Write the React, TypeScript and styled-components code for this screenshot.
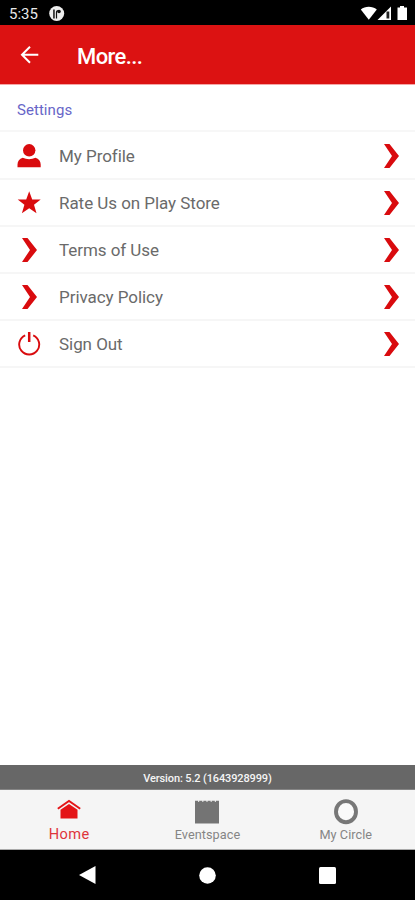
import React from "react";
import styled, { createGlobalStyle } from "styled-components";

const RED = "#dc1212";
const ICON_RED = "#d90b0e";

const GlobalStyle = createGlobalStyle`
  * { box-sizing: border-box; }
  body { margin: 0; background: #fff; font-family: Roboto, "Liberation Sans", sans-serif; }
`;

const Screen = styled.div`
  display: flex;
  flex-direction: column;
  width: 415px;
  height: 900px;
  overflow: hidden;
  background: #fff;
  svg { display: block; flex: none; }
`;

const StatusBar = styled.div`
  display: flex;
  align-items: center;
  height: 25px;
  padding: 2px 6px 0 9px;
  background: #000;
  color: #e8e8e8;
  flex: none;
`;

const Clock = styled.span`
  width: 40px;
  font-size: 15px;
  font-weight: 400;
  line-height: 20px;
`;

const StatusIcons = styled.div`
  display: flex;
  align-items: center;
  margin-left: auto;
`;

const AppBar = styled.header`
  display: flex;
  align-items: center;
  height: 60px;
  padding: 0 20px 1px;
  background: ${RED};
  border-bottom: 1px solid #f5a6a6;
  flex: none;
`;

const BackButton = styled.button`
  width: 57px;
  padding: 0;
  border: 0;
  background: none;
`;

const Title = styled.h1`
  margin: 6px 0 0;
  color: #fff;
  font-size: 22px;
  font-weight: 500;
  line-height: 28px;
  letter-spacing: -0.6px;
`;

const SectionTitle = styled.h2`
  height: 47px;
  margin: 0;
  padding-left: 17px;
  border-bottom: 2px solid #f7f7f7;
  color: #6866c8;
  font-size: 15px;
  font-weight: 400;
  line-height: 50px;
  letter-spacing: 0.05px;
  flex: none;
`;

const List = styled.main`
  flex: 1;
`;

const Row = styled.div`
  display: flex;
  align-items: center;
  height: 47px;
  padding: 0 12px 0 17px;
  border-bottom: 2px solid #f6f6f6;
  &:first-child { height: 48px; padding-top: 1px; }
`;

const RowIcon = styled.div`
  display: flex;
  width: 42px;
`;

const RowLabel = styled.span`
  flex: 1;
  padding-top: 1px;
  color: #6a6a6a;
  font-size: 17px;
  line-height: 22px;
  letter-spacing: -0.05px;
`;

const VersionBar = styled.div`
  height: 25px;
  background: #676767;
  border-bottom: 1px solid #858585;
  color: #f5f5f5;
  font-size: 11px;
  font-weight: 500;
  line-height: 27px;
  letter-spacing: -0.13px;
  text-align: center;
  flex: none;
`;

const TabBar = styled.nav`
  display: grid;
  grid-template-columns: repeat(3, 1fr);
  height: 60px;
  background: #f5f5f5;
  border-bottom: 1px solid #aaa;
  flex: none;
`;

const Tab = styled.div<{ $active?: boolean }>`
  display: flex;
  flex-direction: column;
  align-items: center;
  padding-top: 9px;
  color: ${({ $active }) => ($active ? "#df343b" : "#858585")};
  font-size: ${({ $active }) => ($active ? "14.6px" : "12.7px")};
  line-height: 17px;
  letter-spacing: ${({ $active }) => ($active ? "0.35px" : "0.05px")};
`;

const TabIcon = styled.div`
  height: 27px;
`;

const NavBar = styled.div`
  display: flex;
  justify-content: space-between;
  align-items: center;
  height: 50px;
  padding: 0 79px;
  background: #000;
  flex: none;
`;

const Chevron = () => (
  <svg width="24" height="24" viewBox="0 0 24 24" fill={ICON_RED}>
    <path d="M5 0h5.500l9.500 12-9.500 12H5l8-12z" />
  </svg>
);

const PersonIcon = () => (
  <svg width="24" height="24" viewBox="0 0 24 24" fill={ICON_RED}>
    <circle cx="12.200" cy="6.300" r="6.200" />
    <path d="M.5 23.200v-2.700c0-3.200 2-5.600 5.200-6.700 2 .9 4.200 1.400 6.400 1.400s4.400-.5 6.400-1.400c3.200 1.100 5.200 3.500 5.200 6.700v2.700z" />
  </svg>
);

const StarIcon = () => (
  <svg width="24" height="24" viewBox="0 0 24 24" fill={ICON_RED}>
    <path d="m12.200.3 3 8.200h8.500l-6.700 5.200 2.500 8.500-7.300-5-7.300 5 2.500-8.500L.7 8.500h8.500z" />
  </svg>
);

const PowerIcon = () => (
  <svg width="24" height="24" viewBox="0 0 24 24" fill="none" stroke={ICON_RED} strokeWidth="1.900">
    <path d="M8.200 3.300a10 10 0 1 0 8 0" />
    <path d="M12.200 0v10" strokeWidth="2.500" />
  </svg>
);

const HomeIcon = () => (
  <svg width="24" height="21" viewBox="0 0 24 21">
    <path d="m.8 9.800 11.200-7.900L23.200 9.800" fill="none" stroke="#e41417" strokeWidth="1.900" />
    <path d="M3.500 10.800 12 5l8.500 5.800v8.700h-17z" fill="#e41417" />
  </svg>
);

const EventIcon = () => (
  <svg width="26" height="25" viewBox="0 0 26 25">
    <path d="M1 3h24v21.500H1z" fill="#747474" />
    <path d="M1 2.500h24" fill="none" stroke="#747474" strokeWidth="1.400" strokeDasharray="3.200 .96" />
  </svg>
);

const CircleIcon = () => (
  <svg width="24" height="26" viewBox="0 0 24 26">
    <ellipse cx="12" cy="12.700" rx="10" ry="10.600" fill="#fafafa" stroke="#777" strokeWidth="3.900" />
  </svg>
);

const BackArrow = () => (
  <svg width="20" height="20" viewBox="0 0 20 20" fill="none" stroke="#fff" strokeWidth="2">
    <path d="M18.300 10.700H2.500M10 2.700l-8 8 8 8" />
  </svg>
);

const AppBadge = () => (
  <svg width="16" height="16" viewBox="0 0 16 16">
    <circle cx="7.700" cy="7.500" r="7.500" fill="#eee" />
    <path d="M4.200 3.500h1.500v9H4.200z" fill="#111" />
    <path d="M7.500 12.500v-6c0-1.300.8-2 2-2" fill="none" stroke="#111" strokeWidth="1.200" />
    <circle cx="10" cy="5.500" r="1.800" fill="#111" />
  </svg>
);

const SignalIcons = () => (
  <svg width="49" height="17" viewBox="0 0 49 17" fill="#fff">
    <path d="M.8 4.500C5 .7 12.500 .7 16.800 4.500L8.800 14.800z" />
    <path d="M17.500 15 31 1.500V15z" />
    <path d="M26.500 6.500h2.800v7h-2.800z" fill="#222" />
    <path d="M37.500 2.500H40V1h4v1.500h3V15h-9.500z" />
  </svg>
);

const items = [
  { label: "My Profile", icon: <PersonIcon /> },
  { label: "Rate Us on Play Store", icon: <StarIcon /> },
  { label: "Terms of Use", icon: <Chevron /> },
  { label: "Privacy Policy", icon: <Chevron /> },
  { label: "Sign Out", icon: <PowerIcon /> },
];

export default function App() {
  return (
    <>
      <GlobalStyle />
      <Screen>
        <StatusBar>
          <Clock>5:35</Clock>
          <AppBadge />
          <StatusIcons><SignalIcons /></StatusIcons>
        </StatusBar>
        <AppBar>
          <BackButton aria-label="Back"><BackArrow /></BackButton>
          <Title>More...</Title>
        </AppBar>
        <SectionTitle>Settings</SectionTitle>
        <List>
          {items.map(({ label, icon }) => (
            <Row key={label}>
              <RowIcon>{icon}</RowIcon>
              <RowLabel>{label}</RowLabel>
              <Chevron />
            </Row>
          ))}
        </List>
        <VersionBar>Version: 5.2 (1643928999)</VersionBar>
        <TabBar>
          <Tab $active><TabIcon><HomeIcon /></TabIcon>Home</Tab>
          <Tab><TabIcon><EventIcon /></TabIcon>Eventspace</Tab>
          <Tab><TabIcon><CircleIcon /></TabIcon>My Circle</Tab>
        </TabBar>
        <NavBar>
          <svg width="17" height="18" viewBox="0 0 17 18" fill="#fff"><path d="M0 9 16.500 0v18z" /></svg>
          <svg width="17" height="17" viewBox="0 0 17 17" fill="#fff"><circle cx="8.500" cy="8.500" r="8.300" /></svg>
          <svg width="17" height="17" viewBox="0 0 17 17" fill="#fff"><rect width="17" height="17" rx="1.500" /></svg>
        </NavBar>
      </Screen>
    </>
  );
}
